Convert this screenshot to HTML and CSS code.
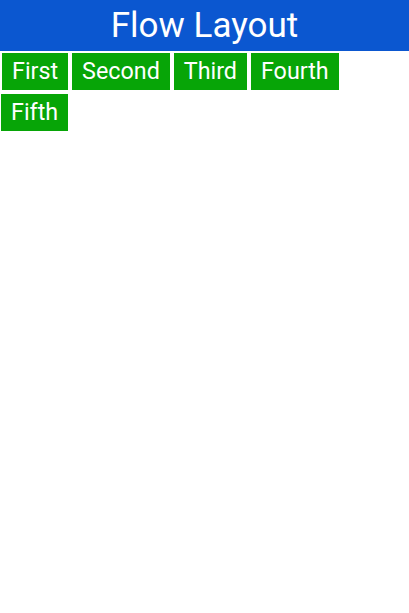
FILE: index.html
```html
<!DOCTYPE html>
<html>
<head>
<meta charset="utf-8">
<link rel="stylesheet" href="styles.css">
</head>
<body>
<header class="title">Flow Layout</header>
<div class="flow">
  <div class="item">First</div>
  <div class="item">Second</div>
  <div class="item">Third</div>
  <div class="item">Fourth</div>
  <div class="item item-wide">Fifth</div>
</div>
</body>
</html>
```
FILE: styles.css
```css
html, body {
  margin: 0;
  padding: 0;
  background: #ffffff;
  font-family: Roboto, "Noto Sans", sans-serif;
}
.title {
  background: #0b57d0;
  color: #ffffff;
  height: 51px;
  line-height: 51px;
  text-align: center;
  font-size: 35px;
}
.flow {
  display: flex;
  flex-wrap: wrap;
  gap: 4px;
  padding: 2px 12px 2px 2px;
}
.item {
  background: #07a507;
  color: #ffffff;
  font-size: 23.3px;
  height: 37px;
  line-height: 37px;
  padding: 0 10px;
}
.item-wide {
  margin-left: -1px;
}
```
